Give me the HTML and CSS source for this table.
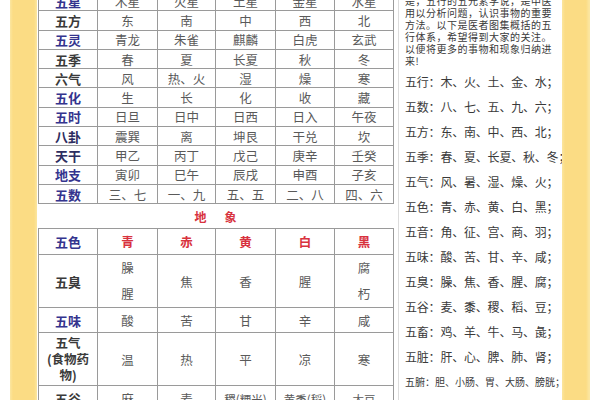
FILE: index.html
```html
<!DOCTYPE html>
<html lang="zh">
<head>
<meta charset="utf-8">
<link rel="stylesheet" href="styles.css">
</head>
<body>
<div class="page">
  <div class="gutter"></div>
  <div class="strip"></div>
  <div class="main">
    <table class="grid t1">
      <colgroup><col class="c0"><col class="c1"><col class="c2"><col class="c3"><col class="c4"><col class="c5"></colgroup>
      <tr><th class="blue">五星</th><td>木星</td><td>火星</td><td>土星</td><td>金星</td><td>水星</td></tr>
      <tr><th>五方</th><td>东</td><td>南</td><td>中</td><td>西</td><td>北</td></tr>
      <tr><th class="blue">五灵</th><td>青龙</td><td>朱雀</td><td>麒麟</td><td>白虎</td><td>玄武</td></tr>
      <tr><th>五季</th><td>春</td><td>夏</td><td>长夏</td><td>秋</td><td>冬</td></tr>
      <tr><th>六气</th><td>风</td><td>热、火</td><td>湿</td><td>燥</td><td>寒</td></tr>
      <tr><th class="blue">五化</th><td>生</td><td>长</td><td>化</td><td>收</td><td>藏</td></tr>
      <tr><th class="blue">五时</th><td>日旦</td><td>日中</td><td>日西</td><td>日入</td><td>午夜</td></tr>
      <tr><th class="navy">八卦</th><td>震巽</td><td>离</td><td>坤艮</td><td>干兑</td><td>坎</td></tr>
      <tr><th class="navy">天干</th><td>甲乙</td><td>丙丁</td><td>戊己</td><td>庚辛</td><td>壬癸</td></tr>
      <tr><th class="blue">地支</th><td>寅卯</td><td>巳午</td><td>辰戌</td><td>申酉</td><td>子亥</td></tr>
      <tr><th class="blue">五数</th><td>三、七</td><td>一、九</td><td>五、五</td><td>二、八</td><td>四、六</td></tr>
    </table>
    <div class="title"><span>地</span><span>象</span></div>
    <table class="grid t2">
      <colgroup><col class="c0"><col class="c1"><col class="c2"><col class="c3"><col class="c4"><col class="c5"></colgroup>
      <tr class="r-color"><th class="blue">五色</th><td class="red">青</td><td class="red">赤</td><td class="red">黄</td><td class="red">白</td><td class="red">黑</td></tr>
      <tr class="r-tall"><th>五臭</th><td><span class="stack">臊<br>腥</span></td><td>焦</td><td>香</td><td>腥</td><td><span class="stack">腐<br>朽</span></td></tr>
      <tr class="r-taste"><th class="blue">五味</th><td>酸</td><td>苦</td><td>甘</td><td>辛</td><td>咸</td></tr>
      <tr class="r-tall2"><th class="wrap">五气<br>(食物药物)</th><td>温</td><td>热</td><td>平</td><td>凉</td><td>寒</td></tr>
      <tr class="r-grain"><th>五谷</th><td>麻</td><td>麦</td><td class="small">稷(粳米)</td><td class="small">黄黍(稻)</td><td class="small">大豆</td></tr>
    </table>
  </div>
  <div class="spacer"></div>
  <div class="panel">
    <p class="intro">是，五行的五元素学说，是中医<br>用以分析问题，认识事物的重要<br>方法。以下是医者图集概括的五<br>行体系，希望得到大家的关注。<br>以便将更多的事物和现象归纳进<br>来!</p>
    <ul class="list">
      <li>五行：木、火、土、金、水；</li>
      <li>五数：八、七、五、九、六；</li>
      <li>五方：东、南、中、西、北；</li>
      <li>五季：春、夏、长夏、秋、冬；</li>
      <li>五气：风、暑、湿、燥、火；</li>
      <li>五色：青、赤、黄、白、黑；</li>
      <li>五音：角、征、宫、商、羽；</li>
      <li>五味：酸、苦、甘、辛、咸；</li>
      <li>五臭：臊、焦、香、腥、腐；</li>
      <li>五谷：麦、黍、稷、稻、豆；</li>
      <li>五畜：鸡、羊、牛、马、彘；</li>
      <li>五脏：肝、心、脾、肺、肾；</li>
      <li class="small-item">五腑：胆、小肠、胃、大肠、膀胱；</li>
      <li>五液：泪、汗、涎、涕、唾；</li>
    </ul>
  </div>
  <div class="strip strip-r"></div>
  <div class="gutter"></div>
</div>
</body>
</html>
```
FILE: styles.css
```css
html, body {
  margin: 0;
  padding: 0;
  background: #fff;
  overflow: hidden;
}
body {
  font-family: "Noto Sans CJK SC", "Noto Sans", sans-serif;
  color: #444;
}
.page {
  display: flex;
  margin-top: -9px;
  height: 420px;
}
.gutter {
  width: 10px;
  flex: none;
}
.strip {
  width: 27px;
  flex: none;
  background: linear-gradient(to right, #fbe6a0 0, #fbdc84 3px, #fbdc84 24px, #fbe6a0 27px);
}
.strip-r {
  width: 28px;
}
.main {
  width: 356px;
  flex: none;
  padding-left: 1px;
}
.grid {
  border-collapse: collapse;
  table-layout: fixed;
  width: 356px;
  background: #fff;
}
.grid th, .grid td {
  border: 1px solid #9a9a9a;
  padding: 0;
  text-align: center;
  vertical-align: middle;
}
.grid th {
  font-size: 13px;
  font-weight: bold;
  color: #3a3a3a;
}
.grid td {
  font-size: 12.5px;
  color: #5a5a5a;
}
.c0 { width: 59px; }
.c1 { width: 60px; }
.c2 { width: 58px; }
.c3 { width: 60px; }
.c4 { width: 59px; }
.c5 { width: 59px; }
.t1 tr { height: 19.3px; }
.t1 th, .t1 td { line-height: 17px; }
.grid th.blue { color: #34348e; }
.grid th.navy { color: #2d2d60; }
.grid td.red { color: #d8323e; font-weight: bold; }
.title {
  height: 24px;
  display: flex;
  justify-content: center;
  align-items: center;
  gap: 18px;
  color: #d8323e;
  font-size: 12px;
  font-weight: bold;
  padding-right: 1px;
}
.t2 .r-color { height: 26px; }
.t2 .r-tall { height: 52px; }
.t2 .r-taste { height: 25px; }
.t2 .r-tall2 { height: 53px; }
.t2 .r-grain { height: 26px; }
.stack {
  display: inline-block;
  line-height: 26px;
}
.grid th.wrap {
  line-height: 16px;
  font-size: 12.5px;
  padding: 0 4px;
}
.grid td.small {
  font-size: 11.5px;
  white-space: nowrap;
}
.spacer {
  width: 4px;
  flex: none;
}
.panel {
  width: 157px;
  flex: none;
  border-left: 1px solid #dcdcdc;
  padding-left: 6px;
  background: #fff;
  color: #3a3a3a;
}
.intro {
  margin: 4px 0 0 0;
  font-size: 10px;
  letter-spacing: 0.5px;
  line-height: 12px;
  white-space: nowrap;
}
.list {
  list-style: none;
  margin: 2px 0 0 0;
  padding: 0;
}
.list li {
  font-size: 12px;
  letter-spacing: -0.2px;
  line-height: 25px;
  height: 25px;
  white-space: nowrap;
}
.list li.small-item {
  font-size: 10px;
  letter-spacing: 0;
}
```
